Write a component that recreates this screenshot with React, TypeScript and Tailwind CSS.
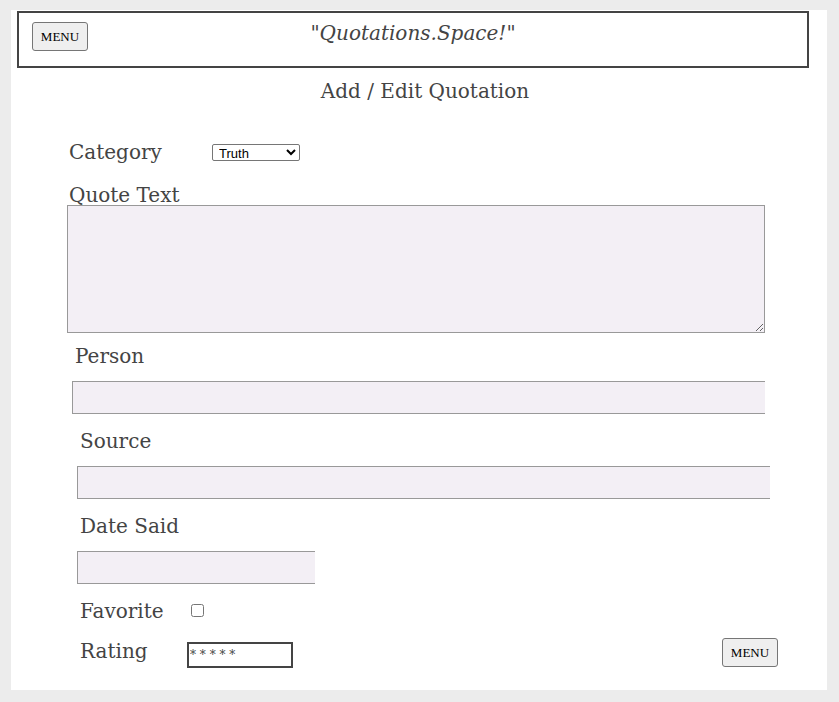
export default function App() {
  const serif = { fontFamily: '"DejaVu Serif", Georgia, serif' };
  return (
    <div className="min-h-[702px] bg-[#ececec] pt-[10px] pl-[11px]" style={serif}>
      <div className="w-[816px] h-[680px] bg-white pt-[1px] text-[#444]">
        <header className="ml-[6px] w-[792px] h-[57px] border-2 border-[#444] grid grid-cols-[1fr_auto_1fr] items-start">
          <div className="pl-[13px] pt-[9px]">
            <MenuButton />
          </div>
          <h1 className="italic text-[20px] leading-none pt-[10px]">"Quotations.Space!"</h1>
          <div />
        </header>

        <h2 className="text-center text-[20px] leading-none mt-[13px] pl-[12px]">Add / Edit Quotation</h2>

        <form className="mt-[39px] pl-[58px]">
          <div className="flex items-center h-[24px]">
            <label className="w-[143px] text-[20px] leading-none">Category</label>
            <select
              defaultValue="Truth"
              className="w-[88px] h-[17px] border border-[#767676] rounded-[2px] text-[13px] leading-none px-[2px] bg-white text-black"
              style={{ fontFamily: '"Liberation Sans", Arial, sans-serif' }}
            >
              <option>Truth</option>
              <option>Wisdom</option>
              <option>Humor</option>
            </select>
          </div>

          <label className="block text-[20px] leading-none mt-[21px]">Quote Text</label>
          <textarea className="block -ml-[2px] mt-[0px] w-[698px] h-[128px] bg-[#f3eff5] border border-[#999] resize-y" />

          <div className="pl-[6px]">
            <label className="block text-[20px] leading-none mt-[13px]">Person</label>
            <input className="block -ml-[3px] mt-[15px] w-[693px] h-[33px] bg-[#f3eff5] border border-[#999] border-r-0" />

            <div className="pl-[5px]">
              <label className="block text-[20px] leading-none mt-[17px]">Source</label>
              <input className="block -ml-[3px] mt-[15px] w-[693px] h-[33px] bg-[#f3eff5] border border-[#999] border-r-0" />

              <label className="block text-[20px] leading-none mt-[17px]">Date Said</label>
              <input className="block -ml-[3px] mt-[15px] w-[238px] h-[33px] bg-[#f3eff5] border border-[#999] border-r-0" />

              <div className="flex items-center mt-[19px] h-[22px]">
                <label className="w-[111px] text-[20px] leading-none -mt-[6px]">Favorite</label>
                <input type="checkbox" className="w-[13px] h-[13px] -mt-[8px]" />
              </div>

              <div className="flex items-center mt-[17px] h-[26px] w-[698px]">
                <label className="w-[107px] text-[20px] leading-none -mt-[8px]">Rating</label>
                <input
                  defaultValue="* * * * *"
                  className="w-[106px] h-[26px] border-2 border-[#444] text-[12px] px-[1px] text-[#444] outline-none"
                  style={serif}
                />
                <div className="ml-auto -mt-[5px]">
                  <MenuButton />
                </div>
              </div>
            </div>
          </div>
        </form>
      </div>
    </div>
  );
}

function MenuButton() {
  return (
    <button
      type="button"
      className="w-[56px] h-[29px] bg-[#efefef] border border-[#767676] rounded-[3px] text-[13px] text-black leading-none"
      style={{ fontFamily: '"Liberation Serif", "Times New Roman", serif' }}
    >
      MENU
    </button>
  );
}
